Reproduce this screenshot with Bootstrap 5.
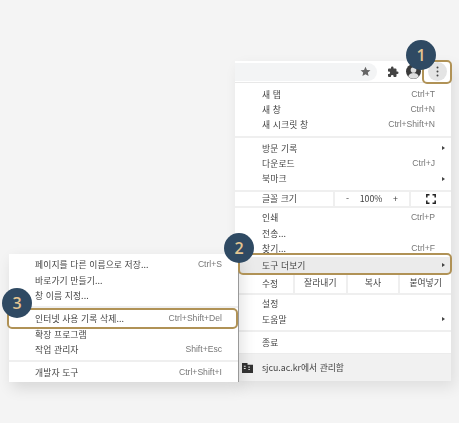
<!DOCTYPE html>
<html lang="ko">
<head>
<meta charset="utf-8">
<title>인터넷 사용 기록 삭제</title>
<link rel="stylesheet" href="https://cdn.jsdelivr.net/npm/bootstrap@5.3.0/dist/css/bootstrap.min.css">
<style>
html,body{margin:0;height:100%;}
body{background:#f4f4f4;font-family:"Noto Sans CJK KR","Liberation Sans",sans-serif;overflow:hidden;}
.stage{position:relative;width:459px;height:423px;padding:61px 8px 0 235px;}
.browser{width:216px;filter:blur(.35px);box-shadow:4px 6px 14px rgba(0,0,0,.09);}
.toolbar{height:22px;background:#fff;border-bottom:1px solid #e8e8e8;}
.omni{width:142px;height:18px;background:#f3f4f5;border-radius:0 10px 10px 0;margin-right:6px;padding-right:6px;}
.tool-ic{width:20px;}
.tool-menu{width:19px;height:19px;border-radius:50%;background:#e4e4e4;margin-left:5px;}
.menu{background:#fff;color:#444;font-size:8.8px;line-height:15.4px;}
.menu .dropdown-item{padding:0 16px 0 27px;color:#444;font-size:8.8px;line-height:15.4px;height:15.4px;letter-spacing:.1px;}
.menu .dropdown-divider{margin:0;opacity:1;height:2px;border:0;border-top:2px solid #efefef;}
.keys{color:#777;font-family:"Liberation Sans",sans-serif;font-size:8.6px;letter-spacing:0;}
.arrow{width:0;height:0;border-left:3px solid #444;border-top:2.5px solid transparent;border-bottom:2.5px solid transparent;margin-right:-10px;}
.top-pad{height:3.5px;}
.sep-a{padding:3px 0;}
.sep-zoom-top{padding-top:3px;}
.sep-zoom-bottom{padding-bottom:2.3px;}
.sep-edit{padding-bottom:1.8px;}
.sep-help{padding:2.6px 0 3px;}
.end-pad{height:3px;}
.zoomrow{height:14.3px;}
.cell{border-left:2px solid #efefef;height:100%;}
.c-label{width:98px;padding-left:27px;}
.c-zoom{width:76px;padding:0 11px;}
.c-full{flex:1;}
.editrow{height:19px;}
.ed-label{width:58px;padding-left:27px;padding-top:2px;}
.ed-cell{width:52.600px;text-align:center;line-height:17px;}
.ed-cell:last-child{flex:1;}
.menu .is-hover.dropdown-item{background:#ebebeb;height:17px;line-height:17px;}
.footer-row{height:28px;background:#f1f1f1;color:#444;padding-left:7px;gap:9px;border-top:1px solid #ececec;}
.submenu{position:absolute;left:9px;top:254px;width:230px;height:128px;border-right:1px solid #999;box-shadow:3px 6px 14px rgba(0,0,0,.12);filter:blur(.35px);}
.submenu .dropdown-item{padding:0 16px 0 26px;}
.sub-top{height:3.3px;}
.sub-gap{padding:3px 0 2.8px;}
.ring{position:absolute;border:2px solid #b09256;border-radius:5px;background:transparent;}
.ring-a{left:422px;top:60px;width:30px;height:24px;}
.ring-b{left:238px;top:253px;width:214px;height:22px;}
.ring-c{left:7px;top:308px;width:231px;height:21px;}
.step{position:absolute;width:30px;height:30px;border-radius:50%;background:#2f4a63;color:#e3c591;font:600 16px/30px "Open Sans","Liberation Sans",sans-serif;text-align:center;}
.step-a{left:406px;top:40px;}
.step-b{left:224px;top:233px;}
.step-c{left:2px;top:288px;}
</style>
</head>
<body>
<div class="stage">
  <div class="browser">
    <div class="toolbar d-flex align-items-center">
      <div class="omni d-flex align-items-center justify-content-end">
        <svg width="11" height="11" viewBox="0 0 24 24"><path fill="#666" d="M12 1.500l3.200 7 7.600.8-5.700 5.100 1.600 7.500L12 18l-6.700 3.900 1.600-7.500L1.200 9.300l7.600-.8z"/></svg>
      </div>
      <div class="tool-ic d-flex justify-content-center">
        <svg width="12" height="12" viewBox="0 0 24 24"><path fill="#444" d="M20.500 11H19V7a2 2 0 0 0-2-2h-4V3.500a2.500 2.500 0 0 0-5 0V5H4a2 2 0 0 0-2 2v3.800h1.500a2.700 2.700 0 0 1 0 5.400H2V20a2 2 0 0 0 2 2h3.800v-1.500a2.700 2.700 0 0 1 5.400 0V22H17a2 2 0 0 0 2-2v-4h1.500a2.500 2.500 0 0 0 0-5z"/></svg>
      </div>
      <div class="tool-ic d-flex justify-content-center">
        <svg width="15" height="15" viewBox="0 0 24 24"><circle cx="12" cy="12" r="12" fill="#3a3a3a"/><circle cx="12" cy="9.500" r="4.500" fill="#ddd"/><path fill="#ddd" d="M3.500 20c1.500-4 5-5.500 8.500-5.500s7 1.500 8.500 5.500a12 12 0 0 1-17 0z"/></svg>
      </div>
      <div class="tool-menu d-flex align-items-center justify-content-center">
        <svg width="3" height="11" viewBox="0 0 3 11"><circle cx="1.500" cy="1.500" r="1" fill="#444"/><circle cx="1.500" cy="5.500" r="1" fill="#444"/><circle cx="1.500" cy="9.500" r="1" fill="#444"/></svg>
      </div>
    </div>
    <div class="menu main-menu">
      <div class="top-pad"></div>
      <a class="dropdown-item d-flex justify-content-between" href="#"><span>새 탭</span><span class="keys">Ctrl+T</span></a>
      <a class="dropdown-item d-flex justify-content-between" href="#"><span>새 창</span><span class="keys">Ctrl+N</span></a>
      <a class="dropdown-item d-flex justify-content-between" href="#"><span>새 시크릿 창</span><span class="keys">Ctrl+Shift+N</span></a>
      <div class="sep-a"><hr class="dropdown-divider"></div>
      <a class="dropdown-item d-flex justify-content-between align-items-center" href="#"><span>방문 기록</span><span class="arrow"></span></a>
      <a class="dropdown-item d-flex justify-content-between" href="#"><span>다운로드</span><span class="keys">Ctrl+J</span></a>
      <a class="dropdown-item d-flex justify-content-between align-items-center" href="#"><span>북마크</span><span class="arrow"></span></a>
      <div class="sep-zoom-top"><hr class="dropdown-divider"></div>
      <div class="zoomrow d-flex align-items-center">
        <div class="c-label">글꼴 크기</div>
        <div class="cell c-zoom d-flex justify-content-between align-items-center"><span>-</span><span>100%</span><span>+</span></div>
        <div class="cell c-full d-flex justify-content-center align-items-center">
          <svg width="10" height="10" viewBox="0 0 10 10"><path fill="none" stroke="#222" stroke-width="1.500" d="M.8 3.500V.8h2.700M6.500.8h2.700v2.700M9.200 6.500v2.700H6.500M3.500 9.200H.8V6.500"/></svg>
        </div>
      </div>
      <div class="sep-zoom-bottom"><hr class="dropdown-divider"></div>
      <a class="dropdown-item d-flex justify-content-between" href="#"><span>인쇄</span><span class="keys">Ctrl+P</span></a>
      <a class="dropdown-item d-flex justify-content-between" href="#"><span>전송...</span></a>
      <a class="dropdown-item d-flex justify-content-between" href="#"><span>찾기...</span><span class="keys">Ctrl+F</span></a>
      <a class="dropdown-item is-hover d-flex justify-content-between align-items-center" href="#"><span>도구 더보기</span><span class="arrow"></span></a>
      <div class="editrow d-flex align-items-center">
        <div class="ed-label">수정</div>
        <div class="cell ed-cell">잘라내기</div>
        <div class="cell ed-cell">복사</div>
        <div class="cell ed-cell">붙여넣기</div>
      </div>
      <div class="sep-edit"><hr class="dropdown-divider"></div>
      <a class="dropdown-item d-flex justify-content-between" href="#"><span>설정</span></a>
      <a class="dropdown-item d-flex justify-content-between align-items-center" href="#"><span>도움말</span><span class="arrow"></span></a>
      <div class="sep-help"><hr class="dropdown-divider"></div>
      <a class="dropdown-item d-flex justify-content-between" href="#"><span>종료</span></a>
      <div class="end-pad"></div>
      <div class="footer-row d-flex align-items-center">
        <svg width="11" height="11" viewBox="0 0 12 12"><path fill="#333" d="M0 1h6v2h6v9H0z"/><path fill="#f1f1f1" d="M7 5h1.500v1.200H7zM7 7.500h1.500v1.200H7zM2 4h2v1.200H2zM2 6.500h2v1.200H2z"/></svg>
        <span>sjcu.ac.kr에서 관리함</span>
      </div>
    </div>
  </div>

  <div class="submenu menu">
    <div class="sub-top"></div>
    <a class="dropdown-item d-flex justify-content-between" href="#"><span>페이지를 다른 이름으로 저장...</span><span class="keys">Ctrl+S</span></a>
    <a class="dropdown-item d-flex justify-content-between" href="#"><span>바로가기 만들기...</span></a>
    <a class="dropdown-item d-flex justify-content-between" href="#"><span>창 이름 지정...</span></a>
    <div class="sub-gap"><hr class="dropdown-divider"></div>
    <a class="dropdown-item d-flex justify-content-between" href="#"><span>인터넷 사용 기록 삭제...</span><span class="keys">Ctrl+Shift+Del</span></a>
    <a class="dropdown-item d-flex justify-content-between" href="#"><span>확장 프로그램</span></a>
    <a class="dropdown-item d-flex justify-content-between" href="#"><span>작업 관리자</span><span class="keys">Shift+Esc</span></a>
    <div class="sub-gap"><hr class="dropdown-divider"></div>
    <a class="dropdown-item d-flex justify-content-between" href="#"><span>개발자 도구</span><span class="keys">Ctrl+Shift+I</span></a>
  </div>

  <div class="ring ring-a"></div>
  <div class="ring ring-b"></div>
  <div class="ring ring-c"></div>
  <div class="step step-a">1</div>
  <div class="step step-b">2</div>
  <div class="step step-c">3</div>
</div>
<script src="https://cdn.jsdelivr.net/npm/bootstrap@5.3.0/dist/js/bootstrap.bundle.min.js"></script>
</body>
</html>
